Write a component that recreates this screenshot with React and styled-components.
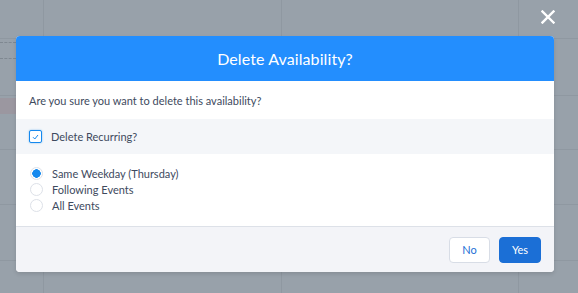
import React, { useState } from 'react'
import styled, { createGlobalStyle } from 'styled-components'

const GlobalStyle = createGlobalStyle`
  html, body {
    margin: 0;
    padding: 0;
    width: 578px;
    height: 293px;
    overflow: hidden;
    font-family: "Lato", "Open Sans", sans-serif;
  }
`

const Backdrop = styled.div`
  position: relative;
  width: 578px;
  height: 293px;
  background-color: #98a1aa;
  background-image:
    linear-gradient(to right, transparent 43px, #8f98a1 43px, #8f98a1 44px, transparent 44px),
    linear-gradient(to right, transparent 281px, #8f98a1 281px, #8f98a1 282px, transparent 282px),
    linear-gradient(to right, transparent 518px, #8f98a1 518px, #8f98a1 519px, transparent 519px),
    linear-gradient(to bottom, transparent 38px, #8f98a1 38px, #8f98a1 39px, transparent 39px),
    linear-gradient(to bottom, transparent 95px, #8f98a1 95px, #8f98a1 96px, transparent 96px),
    linear-gradient(to bottom, transparent 149px, #8f98a1 149px, #8f98a1 150px, transparent 150px),
    linear-gradient(to bottom, transparent 204px, #8f98a1 204px, #8f98a1 205px, transparent 205px),
    linear-gradient(to bottom, transparent 260px, #8f98a1 260px, #8f98a1 261px, transparent 261px);
`

const DashLine = styled.div`
  position: absolute;
  left: 0;
  top: ${p => p.$top}px;
  width: 16px;
  border-top: 1px dashed #7f8891;
`

const EventSlot = styled.div`
  position: absolute;
  left: 0;
  top: 98px;
  width: 16px;
  height: 16px;
  background: #9b97a0;
`

const Overlay = styled.div`
  position: absolute;
  inset: 0;
  padding: 36px 0 0 16px;
  box-sizing: border-box;
`

const CloseButton = styled.button`
  position: absolute;
  top: 9px;
  left: 540px;
  width: 16px;
  height: 16px;
  padding: 0;
  border: none;
  background: none;
  display: flex;
  align-items: center;
  justify-content: center;
`

const Modal = styled.div`
  width: 538px;
  border-radius: 4px;
  overflow: hidden;
  background: #fff;
  box-shadow: 0 2px 4px rgba(0, 0, 0, 0.12);
`

const Header = styled.div`
  height: 45px;
  background: #238efe;
  color: #fff;
  display: flex;
  align-items: center;
  justify-content: center;
  font-size: 16px;
  font-weight: 400;
  letter-spacing: 0.1px;
`

const Intro = styled.div`
  height: 38px;
  padding: 0 13px;
  display: flex;
  align-items: center;
  font-size: 11px;
  color: #3e4a5e;
`

const Band = styled.div`
  height: 35px;
  padding: 0 13px;
  background: #f4f6f9;
  display: flex;
  align-items: center;
  gap: 9px;
  font-size: 11px;
  color: #3e4a5e;
`

const Check = styled.span`
  width: 11px;
  height: 11px;
  border: 1px solid #1589ee;
  border-radius: 2px;
  background: #fff;
  box-shadow: 0 0 2px #79b8ef;
  display: flex;
  align-items: center;
  justify-content: center;
`

const RadioGroup = styled.div`
  padding: 11px 13px 13px 14px;
  display: flex;
  flex-direction: column;
  border-bottom: 1px solid #dde1e8;
`

const RadioRow = styled.label`
  height: 16px;
  display: flex;
  align-items: center;
  gap: 9px;
  font-size: 11px;
  color: #3e4a5e;
`

const Radio = styled.span`
  width: 11px;
  height: 11px;
  border: 1px solid #dde1e8;
  border-radius: 50%;
  background: ${p => (p.$on ? 'radial-gradient(circle, #1589ee 0 4px, #fff 4.5px)' : '#fff')};
`

const Footer = styled.div`
  height: 45px;
  background: #f3f4f8;
  display: flex;
  align-items: center;
  justify-content: flex-end;
  gap: 9px;
  padding: 0 13px;
`

const Button = styled.button`
  height: 26px;
  width: ${p => (p.$primary ? 42 : 41)}px;
  border-radius: 4px;
  border: 1px solid ${p => (p.$primary ? '#1b6fd6' : '#d8dde6')};
  background: ${p => (p.$primary ? '#1b6fd6' : '#fff')};
  color: ${p => (p.$primary ? '#fff' : '#1b6fd6')};
  font-family: "Lato", "Open Sans", sans-serif;
  font-size: 11px;
  padding: 0;
`

const options = ['Same Weekday (Thursday)', 'Following Events', 'All Events']

export default function App() {
  const [choice, setChoice] = useState(0)
  return (
    <>
      <GlobalStyle />
      <Backdrop>
        <DashLine $top={42} />
        <DashLine $top={58} />
        <EventSlot />
        <CloseButton aria-label="Close">
          <svg width="14" height="14" viewBox="0 0 14 14">
            <path d="M1.5 1.5 L12.5 12.5 M12.5 1.5 L1.5 12.5" stroke="#fff" strokeWidth="2.4" strokeLinecap="square" />
          </svg>
        </CloseButton>
        <Overlay>
          <Modal>
            <Header>Delete Availability?</Header>
            <Intro>Are you sure you want to delete this availability?</Intro>
            <Band>
              <Check>
                <svg width="7" height="6" viewBox="0 0 7 6">
                  <path d="M1 3.2 L2.8 5 L6 1" stroke="#1589ee" strokeWidth="1" fill="none" />
                </svg>
              </Check>
              Delete Recurring?
            </Band>
            <RadioGroup>
              {options.map((o, i) => (
                <RadioRow key={o} onClick={() => setChoice(i)}>
                  <Radio $on={choice === i} />
                  {o}
                </RadioRow>
              ))}
            </RadioGroup>
            <Footer>
              <Button>No</Button>
              <Button $primary>Yes</Button>
            </Footer>
          </Modal>
        </Overlay>
      </Backdrop>
    </>
  )
}
